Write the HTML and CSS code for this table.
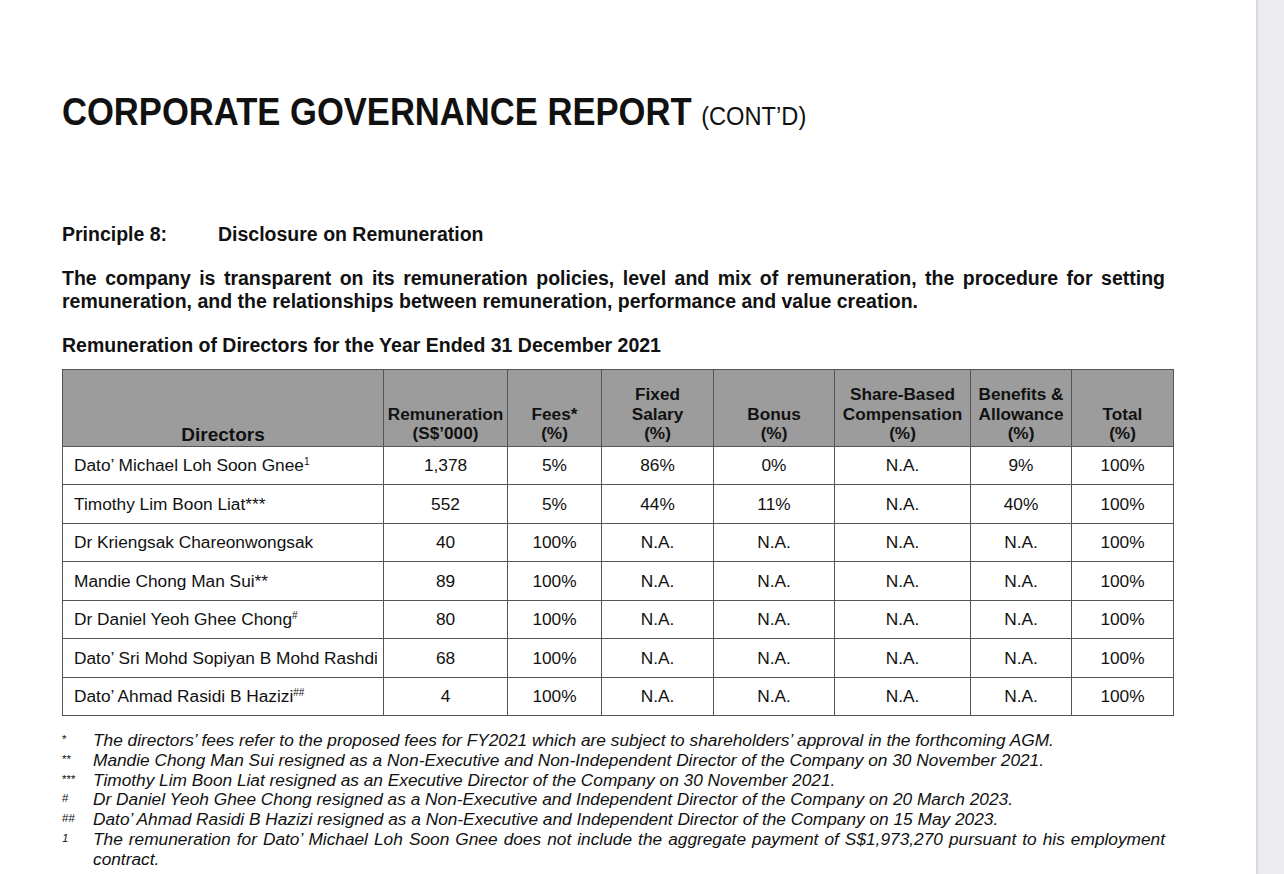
FILE: index.html
```html
<!DOCTYPE html>
<html lang="en">
<head>
<meta charset="utf-8">
<title>Corporate Governance Report</title>
<link rel="stylesheet" href="styles.css">
</head>
<body>
<div class="page">
  <h1 class="title"><span class="title-main">CORPORATE GOVERNANCE REPORT</span> <span class="title-sub">(CONT’D)</span></h1>

  <div class="principle">
    <span class="principle-label">Principle 8:</span>
    <span class="principle-name">Disclosure on Remuneration</span>
  </div>

  <p class="lead">The company is transparent on its remuneration policies, level and mix of remuneration, the procedure for setting remuneration, and the relationships between remuneration, performance and value creation.</p>

  <h2 class="table-title">Remuneration of Directors for the Year Ended 31 December 2021</h2>

  <table class="rem">
    <colgroup>
      <col class="c-name">
      <col class="c-rem">
      <col class="c-fees">
      <col class="c-sal">
      <col class="c-bonus">
      <col class="c-share">
      <col class="c-ben">
      <col class="c-total">
    </colgroup>
    <thead>
      <tr>
        <th class="th-dir">Directors</th>
        <th>Remuneration<br>(S$’000)</th>
        <th>Fees*<br>(%)</th>
        <th>Fixed<br>Salary<br>(%)</th>
        <th>Bonus<br>(%)</th>
        <th>Share-Based<br>Compensation<br>(%)</th>
        <th>Benefits &amp;<br>Allowance<br>(%)</th>
        <th>Total<br>(%)</th>
      </tr>
    </thead>
    <tbody>
      <tr><td class="name">Dato’ Michael Loh Soon Gnee<sup>1</sup></td><td>1,378</td><td>5%</td><td>86%</td><td>0%</td><td>N.A.</td><td>9%</td><td>100%</td></tr>
      <tr><td class="name">Timothy Lim Boon Liat***</td><td>552</td><td>5%</td><td>44%</td><td>11%</td><td>N.A.</td><td>40%</td><td>100%</td></tr>
      <tr><td class="name">Dr Kriengsak Chareonwongsak</td><td>40</td><td>100%</td><td>N.A.</td><td>N.A.</td><td>N.A.</td><td>N.A.</td><td>100%</td></tr>
      <tr><td class="name">Mandie Chong Man Sui**</td><td>89</td><td>100%</td><td>N.A.</td><td>N.A.</td><td>N.A.</td><td>N.A.</td><td>100%</td></tr>
      <tr><td class="name">Dr Daniel Yeoh Ghee Chong<sup>#</sup></td><td>80</td><td>100%</td><td>N.A.</td><td>N.A.</td><td>N.A.</td><td>N.A.</td><td>100%</td></tr>
      <tr><td class="name">Dato’ Sri Mohd Sopiyan B Mohd Rashdi</td><td>68</td><td>100%</td><td>N.A.</td><td>N.A.</td><td>N.A.</td><td>N.A.</td><td>100%</td></tr>
      <tr><td class="name">Dato’ Ahmad Rasidi B Hazizi<sup>##</sup></td><td>4</td><td>100%</td><td>N.A.</td><td>N.A.</td><td>N.A.</td><td>N.A.</td><td>100%</td></tr>
    </tbody>
  </table>

  <ul class="notes">
    <li><span class="mark">*</span><span class="note">The directors’ fees refer to the proposed fees for FY2021 which are subject to shareholders’ approval in the forthcoming AGM.</span></li>
    <li><span class="mark">**</span><span class="note">Mandie Chong Man Sui resigned as a Non-Executive and Non-Independent Director of the Company on 30 November 2021.</span></li>
    <li><span class="mark">***</span><span class="note">Timothy Lim Boon Liat resigned as an Executive Director of the Company on 30 November 2021.</span></li>
    <li><span class="mark">#</span><span class="note">Dr Daniel Yeoh Ghee Chong resigned as a Non-Executive and Independent Director of the Company on 20 March 2023.</span></li>
    <li><span class="mark">##</span><span class="note">Dato’ Ahmad Rasidi B Hazizi resigned as a Non-Executive and Independent Director of the Company on 15 May 2023.</span></li>
    <li><span class="mark mark-i">1</span><span class="note note-j">The remuneration for Dato’ Michael Loh Soon Gnee does not include the aggregate payment of S$1,973,270 pursuant to his employment contract.</span></li>
  </ul>
</div>
<div class="gutter"></div>
</body>
</html>
```

FILE: styles.css
```css
html, body {
  margin: 0;
  padding: 0;
  background: #ffffff;
}

body {
  display: flex;
  width: 1284px;
  height: 874px;
  overflow: hidden;
  font-family: "Liberation Sans", Arial, sans-serif;
  color: #111111;
}

.page {
  width: 1256px;
  flex: 0 0 1256px;
  padding: 90px 0 0 62px;
  box-sizing: border-box;
}

.gutter {
  flex: 1 1 auto;
  background: #ededf1;
  border-left: 1px solid #d6d6da;
  box-shadow: inset 2px 0 2px -1px #dcdce0;
}

.title {
  margin: 0;
  font-size: 38px;
  line-height: 44px;
  font-weight: 700;
  white-space: nowrap;
  transform: scaleX(0.91);
  transform-origin: left center;
}

.title-sub {
  font-size: 26px;
  font-weight: 400;
}

.principle {
  margin-top: 85px;
  display: flex;
  font-size: 19.5px;
  line-height: 23px;
  font-weight: 700;
}

.principle-label {
  width: 156px;
}

.lead {
  margin: 21px 0 0 0;
  width: 1103px;
  font-size: 19.5px;
  line-height: 23px;
  font-weight: 700;
  text-align: justify;
}

.table-title {
  margin: 21px 0 0 0;
  font-size: 19.5px;
  line-height: 23px;
  font-weight: 700;
}

.rem {
  margin-top: 12px;
  width: 1111px;
  border-collapse: collapse;
  table-layout: fixed;
  font-size: 17.3px;
}

.c-name { width: 321px; }
.c-rem { width: 124px; }
.c-fees { width: 94px; }
.c-sal { width: 112px; }
.c-bonus { width: 121px; }
.c-share { width: 136px; }
.c-ben { width: 101px; }
.c-total { width: 102px; }

.rem th,
.rem td {
  border: 1.5px solid #555555;
  text-align: center;
}

.rem th {
  background: #9c9c9c;
  height: 73.5px;
  vertical-align: bottom;
  padding: 0 1px 2px;
  font-size: 17.2px;
  font-weight: 700;
  line-height: 19.5px;
  color: #111111;
}

.rem .th-dir {
  font-size: 19px;
  line-height: 22px;
  padding-bottom: 0;
}

.rem td {
  height: 38.5px;
  padding: 0 4px;
  line-height: 20px;
  box-sizing: border-box;
}

.rem td.name {
  text-align: left;
  padding-left: 11px;
  white-space: nowrap;
}

.rem sup {
  font-size: 10px;
  line-height: 0;
  vertical-align: 6px;
}

.notes {
  list-style: none;
  margin: 15px 0 0 0;
  padding: 0;
  width: 1103px;
  font-size: 17.3px;
  line-height: 19.8px;
}

.notes li {
  display: flex;
}

.mark {
  flex: 0 0 31px;
  font-size: 11.5px;
  line-height: 16px;
}

.mark-i {
  font-style: italic;
}

.note {
  flex: 1 1 auto;
  font-style: italic;
}

.note-j {
  text-align: justify;
}
```
